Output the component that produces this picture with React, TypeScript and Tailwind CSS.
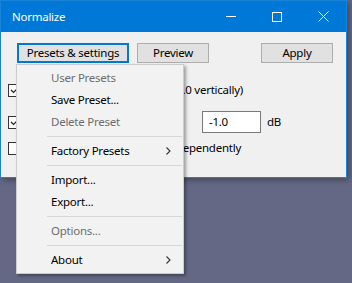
import React from "react";

const font = { fontFamily: '"Noto Sans", "Open Sans", sans-serif' };

function Check({ checked }: { checked: boolean }) {
  return (
    <div className="w-[13px] h-[13px] border border-[#333333] bg-white flex items-center justify-center shrink-0">
      {checked && (
        <svg width="9" height="9" viewBox="0 0 9 9">
          <path d="M1 4 L3.5 6.5 L8 2" fill="none" stroke="#222" strokeWidth="1.2" />
        </svg>
      )}
    </div>
  );
}

function Chevron() {
  return (
    <svg width="5" height="8" viewBox="0 0 5 8" className="absolute right-[12px] top-[7px]">
      <path d="M0.5 0.5 L4 4 L0.5 7.5" fill="none" stroke="#333" strokeWidth="1.1" />
    </svg>
  );
}

function Item({ label, disabled, sub }: { label: string; disabled?: boolean; sub?: boolean }) {
  return (
    <div className={`relative h-[22px] flex items-center pl-[34px] ${disabled ? "text-[#6d6d6d]" : "text-black"}`}>
      {label}
      {sub && <Chevron />}
    </div>
  );
}

function Sep() {
  return (
    <div className="py-[3px] pl-[30px] pr-[1px]">
      <div className="h-px bg-[#d7d7d7]" />
    </div>
  );
}

export default function App() {
  return (
    <div className="relative w-[352px] h-[283px] bg-[#646884] overflow-hidden text-[11.5px] tracking-[-0.25px]" style={font}>
      <div className="w-[347px] h-[178px] border border-[#1883d7] bg-[#f0f0f0] flex flex-col shadow-[2px_2px_6px_rgba(0,0,0,0.35)]">
        <div className="h-[31px] bg-[#0078d7] flex items-center text-white shrink-0">
          <div className="pl-[11px] flex-1">Normalize</div>
          <div className="w-[46px] h-full flex items-center justify-center">
            <div className="w-[10px] h-px bg-white" />
          </div>
          <div className="w-[46px] h-full flex items-center justify-center">
            <div className="w-[10px] h-[10px] border border-white" />
          </div>
          <div className="w-[46px] h-full flex items-center justify-center">
            <svg width="11" height="11" viewBox="0 0 11 11">
              <path d="M0.5 0.5 L10.5 10.5 M10.5 0.5 L0.5 10.5" stroke="white" strokeWidth="1" />
            </svg>
          </div>
        </div>
        <div className="flex items-center pt-[11px] pl-[16px] pr-[13px] text-black">
          <div className="w-[112px] h-[20px] border-2 border-[#0078d7] bg-[#e1e1e1] flex items-center justify-center">
            Presets &amp; settings
          </div>
          <div className="ml-[8px] w-[72px] h-[20px] border border-[#adadad] bg-[#e1e1e1] flex items-center justify-center">
            Preview
          </div>
          <div className="ml-auto w-[72px] h-[20px] border border-[#adadad] bg-[#e1e1e1] flex items-center justify-center">
            Apply
          </div>
        </div>
        <div className="flex flex-col pl-[7px] text-black">
          <div className="flex items-center gap-[5px] mt-[20px] h-[14px]">
            <Check checked />
            <span className="whitespace-nowrap">Remove DC offset (center on 0.0 vertically)</span>
          </div>
          <div className="flex items-center gap-[5px] mt-[14px] h-[22px]">
            <Check checked />
            <span className="w-[171px] whitespace-nowrap">Normalize peak amplitude to</span>
            <div className="w-[59px] h-[22px] border border-[#7a7a7a] bg-white flex items-center pl-[6px]">-1.0</div>
            <span className="ml-[1px]">dB</span>
          </div>
          <div className="flex items-center gap-[5px] mt-[8px] h-[14px]">
            <Check checked={false} />
            <span className="whitespace-nowrap">Normalize stereo channels independently</span>
          </div>
        </div>
      </div>
      <div className="absolute left-[16px] top-[64px] w-[168px] border border-[#cccccc] bg-[#f2f2f2] py-[2px] shadow-[2px_2px_3px_rgba(0,0,0,0.35)]">
        <Item label="User Presets" disabled />
        <Item label="Save Preset..." />
        <Item label="Delete Preset" disabled />
        <Sep />
        <Item label="Factory Presets" sub />
        <Sep />
        <Item label="Import..." />
        <Item label="Export..." />
        <Sep />
        <Item label="Options..." disabled />
        <Sep />
        <Item label="About" sub />
      </div>
    </div>
  );
}
